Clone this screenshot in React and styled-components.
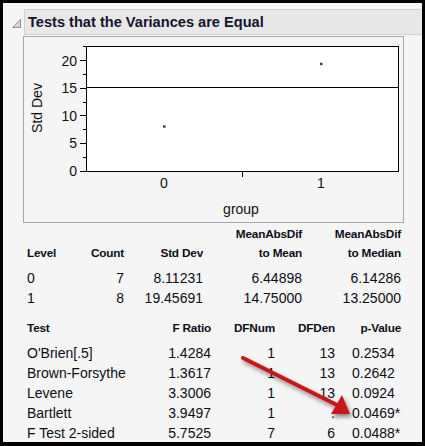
import React from "react";
import styled, { createGlobalStyle } from "styled-components";

const GlobalStyle = createGlobalStyle`
  html, body {
    margin: 0;
    padding: 0;
    background: #000;
  }
  body {
    font-family: "Liberation Sans", Arial, sans-serif;
  }
`;

const levels = [
  { level: "0", count: 7, sd: "8.11231", toMean: "6.44898", toMedian: "6.14286" },
  { level: "1", count: 8, sd: "19.45691", toMean: "14.75000", toMedian: "13.25000" },
];

const tests = [
  { name: "O'Brien[.5]", f: "1.4284", num: 1, den: 13, p: "0.2534" },
  { name: "Brown-Forsythe", f: "1.3617", num: 1, den: 13, p: "0.2642" },
  { name: "Levene", f: "3.3006", num: 1, den: 13, p: "0.0924" },
  { name: "Bartlett", f: "3.9497", num: 1, den: ".", p: "0.0469*" },
  { name: "F Test 2-sided", f: "5.7525", num: 7, den: 6, p: "0.0488*" },
];

// plot geometry (inside the framed box)
const PLOT = { left: 62, right: 374, top: 9, bottom: 134 };
const yScale = 5.515;
const yAt = (v) => PLOT.bottom - v * yScale;

function Chart() {
  const majors = [0, 5, 10, 15, 20];
  const minors = [2.5, 7.5, 12.5, 17.5, 22.5];
  const points = [
    { x: 140, v: 8.11231, label: "0" },
    { x: 297, v: 19.45691, label: "1" },
  ];
  return (
    <svg width="379" height="185" viewBox="0 0 379 185">
      <rect
        x={PLOT.left}
        y={PLOT.top}
        width={PLOT.right - PLOT.left}
        height={PLOT.bottom - PLOT.top}
        fill="#fff"
        stroke="#000"
        strokeWidth="1"
        shapeRendering="crispEdges"
      />
      {majors.map((v) => (
        <g key={v}>
          <line x1={PLOT.left - 6} x2={PLOT.left} y1={yAt(v)} y2={yAt(v)} stroke="#000" shapeRendering="crispEdges" />
          <text x={PLOT.left - 9} y={yAt(v) + 5} textAnchor="end" fontSize="14" fontFamily="Liberation Sans, Arial, sans-serif" fill="#111">
            {v}
          </text>
        </g>
      ))}
      {minors.map((v) => (
        <line key={v} x1={PLOT.left - 3} x2={PLOT.left} y1={yAt(v)} y2={yAt(v)} stroke="#000" shapeRendering="crispEdges" />
      ))}
      <line x1={PLOT.left} x2={PLOT.right} y1={yAt(15.2)} y2={yAt(15.2)} stroke="#000" shapeRendering="crispEdges" />
      {points.map((p) => (
        <g key={p.label}>
          <rect x={p.x - 1} y={yAt(p.v) - 1} width="2.5" height="2.5" fill="#444" />
          <text x={p.x} y={151} textAnchor="middle" fontSize="14" fontFamily="Liberation Sans, Arial, sans-serif" fill="#111">
            {p.label}
          </text>
        </g>
      ))}
      <line x1="218" x2="218" y1={PLOT.bottom} y2={PLOT.bottom + 6} stroke="#000" shapeRendering="crispEdges" />
      <text x="217" y="177" textAnchor="middle" fontSize="14" fontFamily="Liberation Sans, Arial, sans-serif" fill="#111">
        group
      </text>
      <text
        x="0"
        y="0"
        transform="translate(18 71) rotate(-90)"
        textAnchor="middle"
        fontSize="14"
        fontFamily="Liberation Sans, Arial, sans-serif"
        fill="#111"
      >
        Std Dev
      </text>
    </svg>
  );
}

export default function App() {
  return (
    <>
      <GlobalStyle />
      <Frame>
        <Panel>
          <HeaderRow>
            <Disclosure width="9" height="9" viewBox="0 0 9 9">
              <path d="M8.5 0.5 L8.5 8.5 L0.5 8.5 Z" fill="#d6d6d6" stroke="#8f8f8f" strokeWidth="1" />
            </Disclosure>
            <TitleBar>Tests that the Variances are Equal</TitleBar>
          </HeaderRow>
          <Body>
            <PlotBox>
              <Chart />
            </PlotBox>

            <Table $cols="40px 57px 79px 99px 99px">
              <HeadCell $align="left" $tall></HeadCell>
              <HeadCell $tall></HeadCell>
              <HeadCell $tall></HeadCell>
              <HeadCell $tall>MeanAbsDif</HeadCell>
              <HeadCell $tall>MeanAbsDif</HeadCell>
              <HeadCell $align="left">Level</HeadCell>
              <HeadCell>Count</HeadCell>
              <HeadCell>Std Dev</HeadCell>
              <HeadCell>to Mean</HeadCell>
              <HeadCell>to Median</HeadCell>
              <Spacer $h={5} />
              {levels.map((r) => (
                <React.Fragment key={r.level}>
                  <Cell $align="left">{r.level}</Cell>
                  <Cell>{r.count}</Cell>
                  <Cell>{r.sd}</Cell>
                  <Cell>{r.toMean}</Cell>
                  <Cell>{r.toMedian}</Cell>
                </React.Fragment>
              ))}
            </Table>

            <Table $cols="124px 60px 64px 60px 66px" $gapTop={11}>
              <HeadCell $align="left">Test</HeadCell>
              <HeadCell>F Ratio</HeadCell>
              <HeadCell>DFNum</HeadCell>
              <HeadCell>DFDen</HeadCell>
              <HeadCell>p-Value</HeadCell>
              <Spacer $h={5} />
              {tests.map((t) => (
                <React.Fragment key={t.name}>
                  <Cell $align="left">{t.name}</Cell>
                  <Cell>{t.f}</Cell>
                  <Cell>{t.num}</Cell>
                  <Cell>{t.den}</Cell>
                  <PCell>{t.p}</PCell>
                </React.Fragment>
              ))}
            </Table>
          </Body>

          <Arrow viewBox="0 0 425 446" width="425" height="446">
            <defs>
              <filter id="shadow" x="-20%" y="-20%" width="140%" height="140%">
                <feDropShadow dx="2" dy="3" stdDeviation="2" floodColor="#000" floodOpacity="0.45" />
              </filter>
            </defs>
            <g filter="url(#shadow)">
              <line x1="243" y1="358" x2="337" y2="405" stroke="#c8141a" strokeWidth="4" strokeLinecap="round" />
              <path d="M350 414 L331 414 L342 395 Z" fill="#c8141a" />
            </g>
          </Arrow>
        </Panel>
      </Frame>
    </>
  );
}

const Frame = styled.div`
  width: 425px;
  height: 446px;
  box-sizing: border-box;
  padding: 3px 3px 4px 3px;
  background: #000;
`;

const Panel = styled.div`
  position: relative;
  height: 100%;
  background: #f5f5f5;
  overflow: hidden;
  padding-top: 6px;
  box-sizing: border-box;
  color: #0d0d18;
`;

const HeaderRow = styled.div`
  display: flex;
  align-items: center;
  padding-left: 9px;
`;

const Disclosure = styled.svg`
  flex: none;
  margin-right: 3px;
  margin-top: 3px;
`;

const TitleBar = styled.div`
  flex: 1;
  height: 26px;
  box-sizing: border-box;
  background: #e8e8e8;
  border: 1px solid #d2d2d2;
  border-right: none;
  padding-left: 3px;
  font-weight: bold;
  font-size: 14.6px;
  line-height: 24px;
  color: #14142a;
`;

const Body = styled.div`
  padding-left: 20px;
  padding-top: 1px;
`;

const PlotBox = styled.div`
  width: 381px;
  height: 187px;
  box-sizing: border-box;
  border: 1px solid #a8a8a8;
  svg {
    display: block;
  }
`;

const Table = styled.div`
  display: grid;
  grid-template-columns: ${(p) => p.$cols};
  margin-top: ${(p) => p.$gapTop || 2}px;
  padding-left: 4px;
`;

const HeadCell = styled.div`
  font-weight: bold;
  font-size: 11.8px;
  line-height: 19px;
  height: 19px;
  text-align: ${(p) => p.$align || "right"};
  white-space: nowrap;
  letter-spacing: -0.2px;
`;

const Cell = styled.div`
  font-size: 14px;
  line-height: 20px;
  height: 20px;
  text-align: ${(p) => p.$align || "right"};
  white-space: nowrap;
`;

const PCell = styled(Cell)`
  text-align: left;
  padding-left: 17px;
`;

const Spacer = styled.div`
  grid-column: 1 / -1;
  height: ${(p) => p.$h}px;
`;

const Arrow = styled.svg`
  position: absolute;
  left: -3px;
  top: -3px;
  pointer-events: none;
`;
